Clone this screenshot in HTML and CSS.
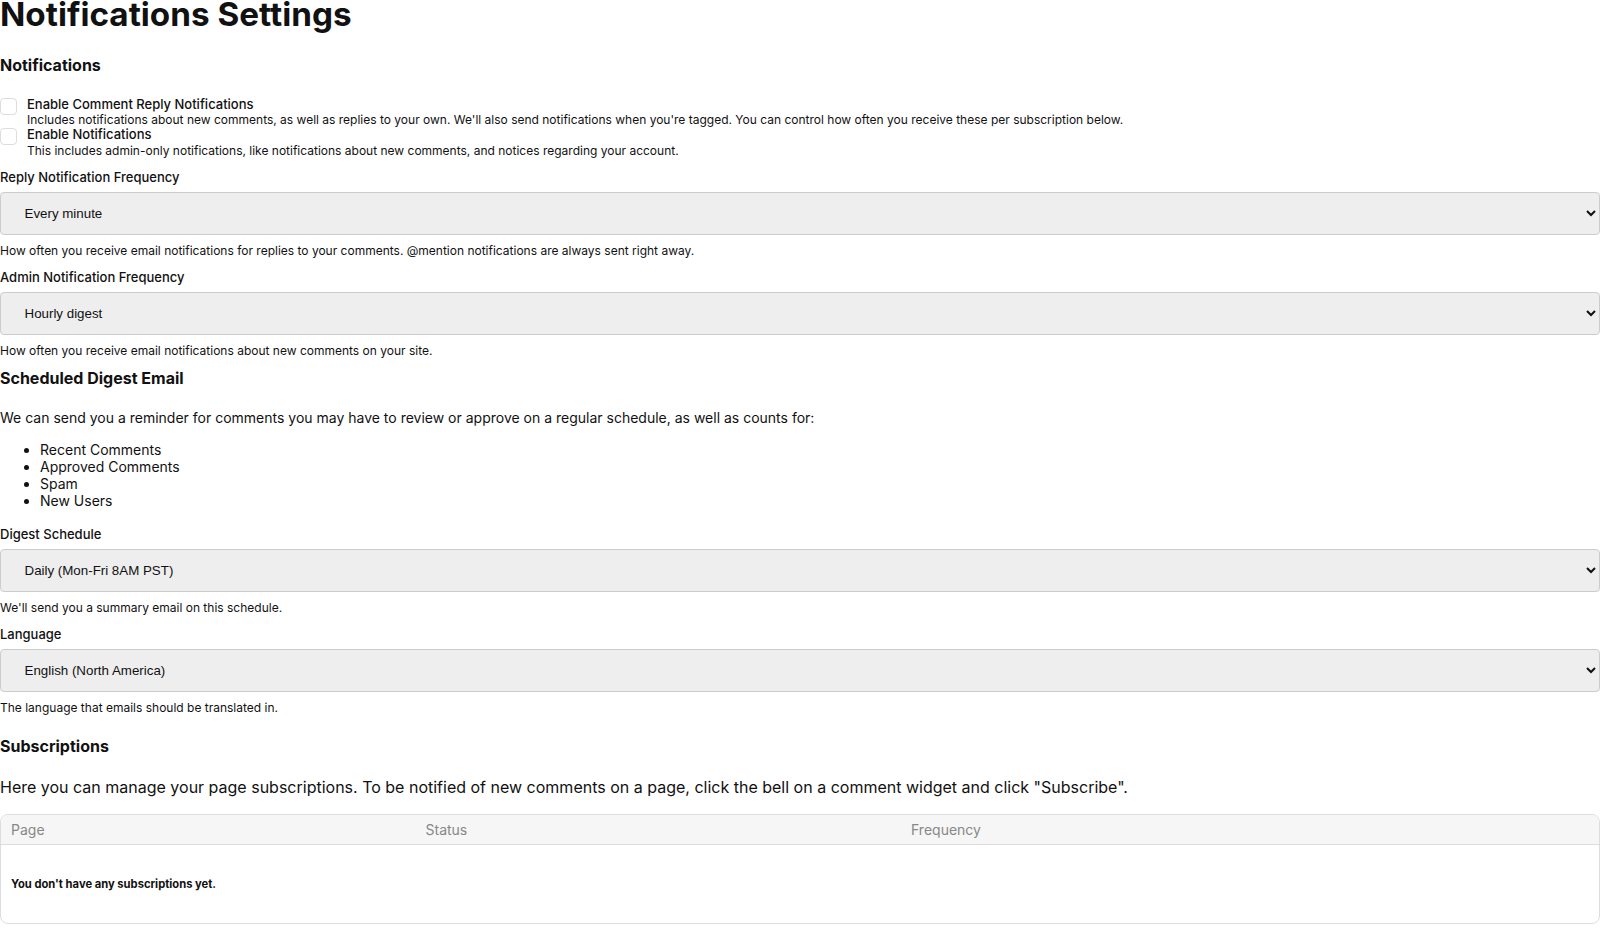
FILE: index.html
```html
<!DOCTYPE html>
<html lang="en">
<head>
    <meta charset="UTF-8">
    <meta name="viewport" content="width=device-width, initial-scale=1.0">
    <title>Notifications Settings</title>
    <link rel="stylesheet" href="styles.css">
</head>
<body>
    <div class="settings">
        <h1>Notifications Settings</h1>

        <h2 class="section-title first">Notifications</h2>
        <div class="checks">
            <label class="check-row">
                <input type="checkbox">
                <span class="check-text">
                    <span class="check-label">Enable Comment Reply Notifications</span>
                    <span class="check-desc">Includes notifications about new comments, as well as replies to your own. We'll also send notifications when you're tagged. You can control how often you receive these per subscription below.</span>
                </span>
            </label>
            <label class="check-row">
                <input type="checkbox">
                <span class="check-text">
                    <span class="check-label">Enable Notifications</span>
                    <span class="check-desc">This includes admin-only notifications, like notifications about new comments, and notices regarding your account.</span>
                </span>
            </label>
        </div>

        <div class="field">
            <label class="field-label" for="replyFreq">Reply Notification Frequency</label>
            <select id="replyFreq">
                <option>Every minute</option>
                <option>Hourly digest</option>
                <option>Daily digest</option>
            </select>
            <div class="help">How often you receive email notifications for replies to your comments. @mention notifications are always sent right away.</div>
        </div>

        <div class="field">
            <label class="field-label" for="adminFreq">Admin Notification Frequency</label>
            <select id="adminFreq">
                <option>Hourly digest</option>
                <option>Every minute</option>
                <option>Daily digest</option>
            </select>
            <div class="help">How often you receive email notifications about new comments on your site.</div>
        </div>

        <h2 class="section-title">Scheduled Digest Email</h2>
        <p class="intro">We can send you a reminder for comments you may have to review or approve on a regular schedule, as well as counts for:</p>
        <ul class="counts">
            <li>Recent Comments</li>
            <li>Approved Comments</li>
            <li>Spam</li>
            <li>New Users</li>
        </ul>

        <div class="field">
            <label class="field-label" for="digest">Digest Schedule</label>
            <select id="digest">
                <option>Daily (Mon-Fri 8AM PST)</option>
                <option>Weekly</option>
                <option>Never</option>
            </select>
            <div class="help">We'll send you a summary email on this schedule.</div>
        </div>

        <div class="field">
            <label class="field-label" for="language">Language</label>
            <select id="language">
                <option>English (North America)</option>
            </select>
            <div class="help">The language that emails should be translated in.</div>
        </div>

        <h2 class="section-title subs">Subscriptions</h2>
        <p class="subs-intro">Here you can manage your page subscriptions. To be notified of new comments on a page, click the bell on a comment widget and click "Subscribe".</p>

        <table class="subs-table">
            <thead>
                <tr>
                    <th class="col-page">Page</th>
                    <th class="col-status">Status</th>
                    <th>Frequency</th>
                </tr>
            </thead>
            <tbody>
                <tr>
                    <td colspan="3" class="empty">You don't have any subscriptions yet.</td>
                </tr>
            </tbody>
        </table>
    </div>
</body>
</html>
```

FILE: styles.css
```css
body {
    margin: 0;
    font-family: 'Inter', 'Noto Sans', sans-serif;
    color: #111;
    background: #fff;
}

h1 {
    margin: 0;
    font-size: 33.25px;
    line-height: 28px;
    font-weight: 700;
}

.section-title {
    margin: 9.6px 0 0;
    font-size: 16px;
    line-height: 20px;
    font-weight: 700;
}

.section-title.first {
    margin-top: 27.3px;
}

.section-title.subs {
    margin-top: 20.4px;
}

/* checkboxes */
.checks {
    margin-top: 21.5px;
}

.check-row {
    display: flex;
    align-items: flex-start;
    gap: 10px;
}

.check-row input[type="checkbox"] {
    appearance: none;
    -webkit-appearance: none;
    width: 17px;
    height: 17px;
    margin: 1px 0 0;
    border: 1px solid #ddd;
    border-radius: 4px;
    background: #fff;
    flex-shrink: 0;
}

.check-text {
    display: flex;
    flex-direction: column;
}

.check-label {
    font-size: 13px;
    font-weight: 500;
    line-height: 15.3px;
}

.check-desc {
    font-size: 12px;
    line-height: 15.3px;
}

/* select fields */
.field {
    margin-top: 10.4px;
}

.field-label {
    display: block;
    padding-top: 1.5px;
    font-size: 13px;
    font-weight: 500;
    line-height: 15.3px;
}

select {
    display: block;
    width: 100%;
    height: 43px;
    margin-top: 6.5px;
    padding: 0 10px 0 19.5px;
    border: 1px solid #ccc;
    border-radius: 4px;
    background-color: #eee;
    font-family: 'Liberation Sans', Arial, sans-serif;
    font-size: 13.333px;
    color: #111;
    box-sizing: border-box;
}

.help {
    margin-top: 8px;
    font-size: 12px;
    line-height: 15.3px;
}

/* digest */
.intro {
    margin: 21.2px 0 0;
    font-size: 14px;
    line-height: 17px;
}

.counts {
    margin: 15.7px 0 0;
    padding-left: 40px;
    font-size: 14px;
    line-height: 17px;
}

.counts + .field {
    margin-top: 16.5px;
}

/* subscriptions */
.subs-intro {
    margin: 22.1px 0 0;
    font-size: 16px;
    line-height: 19.4px;
}

.subs-table {
    width: 100%;
    margin-top: 16.8px;
    border: 1px solid #ddd;
    border-radius: 8px;
    border-collapse: separate;
    border-spacing: 0;
    overflow: hidden;
    table-layout: fixed;
}

.subs-table th {
    height: 29px;
    padding: 0 10px;
    background: #f6f6f6;
    border-bottom: 1px solid #ddd;
    color: #888;
    font-size: 14px;
    font-weight: 400;
    text-align: left;
}

.col-page {
    width: 394.5px;
}

.col-status {
    width: 465.5px;
}

.subs-table .empty {
    height: 78px;
    padding: 0 10px;
    font-size: 11.2px;
    font-weight: 700;
}
```
